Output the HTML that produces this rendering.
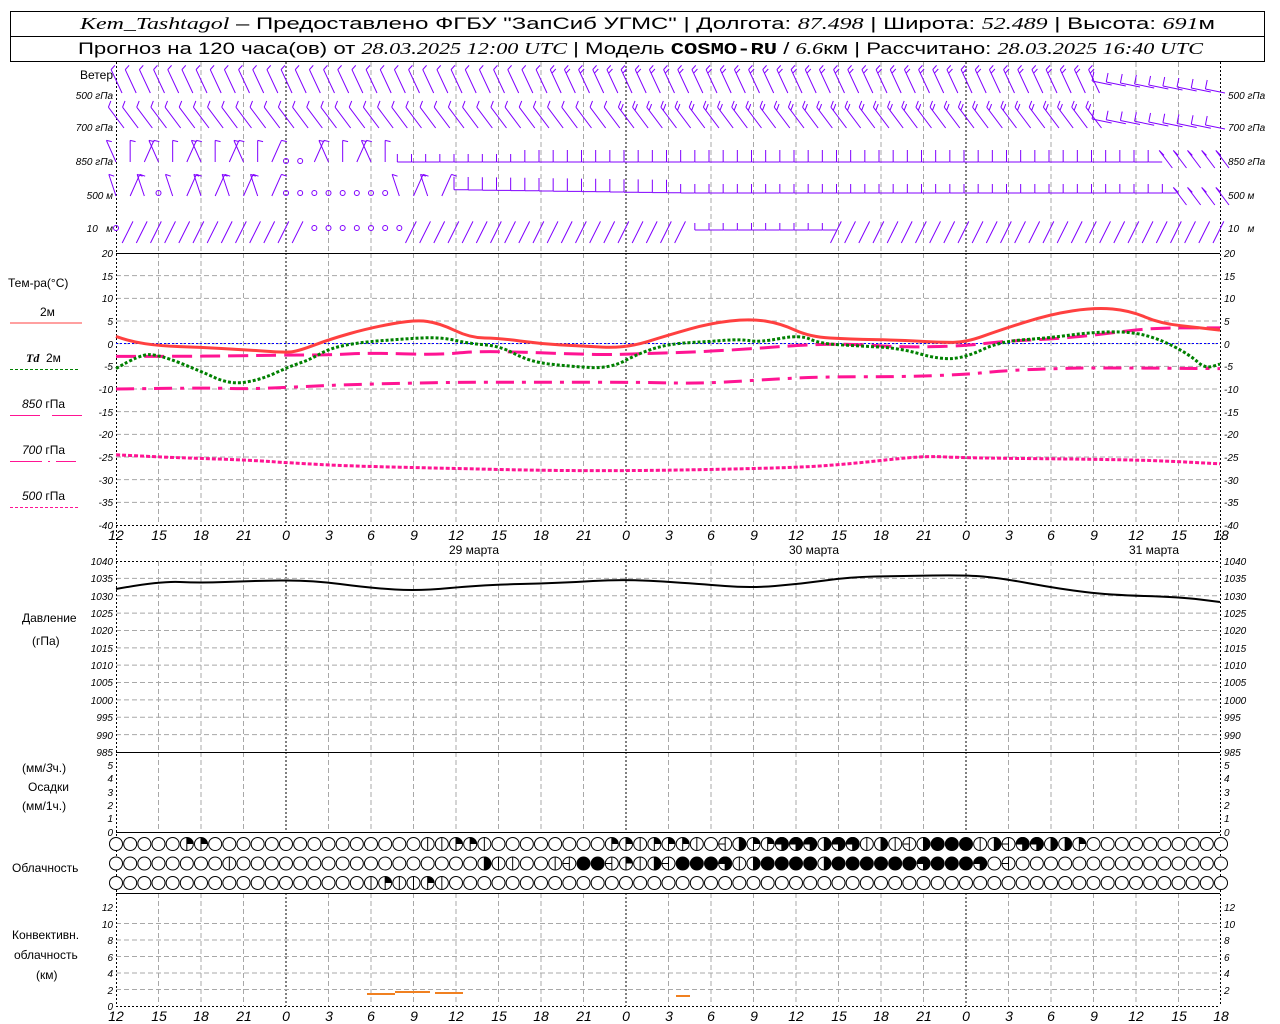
<!DOCTYPE html>
<html><head><meta charset="utf-8"><style>
html,body{margin:0;padding:0;background:#fff;width:1280px;height:1024px;overflow:hidden}
svg{display:block}
.t{font-family:"Liberation Sans",sans-serif;font-size:10px;font-style:italic;fill:#000}
.l{font-family:"Liberation Sans",sans-serif;font-size:12px;fill:#000}
.h{font-family:"Liberation Sans",sans-serif;font-size:17px;fill:#000}
.hi{font-family:"Liberation Serif",serif;font-style:italic}
.tm{font-family:"Liberation Sans",sans-serif;font-size:14px;font-style:italic;fill:#000}
</style></head><body>
<svg id="s" width="1280" height="1024" viewBox="0 0 1280 1024" xmlns="http://www.w3.org/2000/svg">
<rect x="0" y="0" width="1280" height="1024" fill="#fff"/>
<rect x="10.5" y="11.5" width="1254" height="50" fill="none" stroke="#000"/>
<line x1="10" y1="36.5" x2="1265" y2="36.5" stroke="#000"/>
<text class="h" x="80" y="29" textLength="1135" lengthAdjust="spacingAndGlyphs"><tspan class="hi">Kem_Tashtagol</tspan> – Предоставлено ФГБУ "ЗапСиб УГМС" | Долгота: <tspan class="hi">87.498</tspan> | Широта: <tspan class="hi">52.489</tspan> | Высота: <tspan class="hi">691</tspan>м</text>
<text class="h" x="78" y="54" textLength="1125" lengthAdjust="spacingAndGlyphs">Прогноз на 120 часа(ов) от <tspan class="hi">28.03.2025 12:00 UTC</tspan>  | Модель <tspan font-family="Liberation Mono" font-weight="bold">COSMO-RU</tspan> / <tspan class="hi">6.6</tspan>км | Рассчитано: <tspan class="hi">28.03.2025 16:40 UTC</tspan></text>
<g id="grid"></g>
<g id="data"></g>
<g class="t" text-anchor="end">
<text x="113" y="79" style="font-style:normal;font-size:12px">Ветер</text>
<text x="113" y="99">500 гПа</text>
<text x="113" y="131">700 гПа</text>
<text x="113" y="165">850 гПа</text>
<text x="113" y="199">500 м</text>
<text x="113" y="232">10&#160;&#160;&#160;м</text>
</g>
<g class="t">
<text x="1228" y="99">500 гПа</text>
<text x="1228" y="131">700 гПа</text>
<text x="1228" y="165">850 гПа</text>
<text x="1228" y="199">500 м</text>
<text x="1228" y="232">10&#160;&#160;&#160;м</text>
</g>
<text class="l" x="8" y="287" font-size="13">Тем-ра(°C)</text>
<text class="l" x="40" y="316" font-size="11">2м</text>
<line x1="10" y1="323" x2="82" y2="323" stroke="#ff4040" stroke-width="1"/>
<text class="l" x="26" y="362" font-size="11"><tspan class="hi" font-weight="bold">Td</tspan>&#160;&#160;2м</text>
<line x1="10" y1="369.5" x2="78" y2="369.5" stroke="#008000" stroke-dasharray="3,2"/>
<text class="l" x="22" y="408" font-size="11"><tspan font-style="italic">850</tspan> гПа</text>
<path d="M10 415.5H40M52 415.5H82" stroke="#ff1493"/>
<text class="l" x="22" y="454" font-size="11"><tspan font-style="italic">700</tspan> гПа</text>
<path d="M10 461.5H42M48 461.5H50M56 461.5H76" stroke="#ff1493"/>
<text class="l" x="22" y="500" font-size="11"><tspan font-style="italic">500</tspan> гПа</text>
<line x1="10" y1="507.5" x2="78" y2="507.5" stroke="#ff1493" stroke-dasharray="3,2"/>
<text class="l" x="22" y="622">Давление</text>
<text class="l" x="32" y="645">(гПа)</text>
<text class="l" x="22" y="772">(мм/<tspan font-style="italic">3</tspan>ч.)</text>
<text class="l" x="28" y="791">Осадки</text>
<text class="l" x="22" y="810">(мм/1ч.)</text>
<text class="l" x="12" y="872">Облачность</text>
<text class="l" x="12" y="939">Конвективн.</text>
<text class="l" x="14" y="959">облачность</text>
<text class="l" x="36" y="979">(км)</text>
<g class="t" text-anchor="end">
<text x="113" y="257">20</text><text x="113" y="280">15</text><text x="113" y="302">10</text><text x="113" y="325">5</text><text x="113" y="348">0</text><text x="113" y="370">-5</text><text x="113" y="393">-10</text><text x="113" y="416">-15</text><text x="113" y="438">-20</text><text x="113" y="461">-25</text><text x="113" y="484">-30</text><text x="113" y="506">-35</text><text x="113" y="529">-40</text>
<text x="113" y="565">1040</text><text x="113" y="582">1035</text><text x="113" y="600">1030</text><text x="113" y="617">1025</text><text x="113" y="634">1020</text><text x="113" y="652">1015</text><text x="113" y="669">1010</text><text x="113" y="686">1005</text><text x="113" y="704">1000</text><text x="113" y="721">995</text><text x="113" y="739">990</text><text x="113" y="756">985</text>
<text x="113" y="769">5</text><text x="113" y="782">4</text><text x="113" y="796">3</text><text x="113" y="809">2</text><text x="113" y="822">1</text><text x="113" y="836">0</text>
<text x="113" y="911">12</text><text x="113" y="928">10</text><text x="113" y="944">8</text><text x="113" y="961">6</text><text x="113" y="977">4</text><text x="113" y="994">2</text><text x="113" y="1010">0</text>
</g>
<g class="t">
<text x="1224" y="257">20</text><text x="1224" y="280">15</text><text x="1224" y="302">10</text><text x="1224" y="325">5</text><text x="1224" y="348">0</text><text x="1224" y="370">-5</text><text x="1224" y="393">-10</text><text x="1224" y="416">-15</text><text x="1224" y="438">-20</text><text x="1224" y="461">-25</text><text x="1224" y="484">-30</text><text x="1224" y="506">-35</text><text x="1224" y="529">-40</text>
<text x="1224" y="565">1040</text><text x="1224" y="582">1035</text><text x="1224" y="600">1030</text><text x="1224" y="617">1025</text><text x="1224" y="634">1020</text><text x="1224" y="652">1015</text><text x="1224" y="669">1010</text><text x="1224" y="686">1005</text><text x="1224" y="704">1000</text><text x="1224" y="721">995</text><text x="1224" y="739">990</text><text x="1224" y="756">985</text>
<text x="1224" y="769">5</text><text x="1224" y="782">4</text><text x="1224" y="796">3</text><text x="1224" y="809">2</text><text x="1224" y="822">1</text><text x="1224" y="836">0</text>
<text x="1224" y="911">12</text><text x="1224" y="928">10</text><text x="1224" y="944">8</text><text x="1224" y="961">6</text><text x="1224" y="977">4</text><text x="1224" y="994">2</text>
</g>
<g class="tm" text-anchor="middle">
<text x="116" y="540">12</text><text x="159" y="540">15</text><text x="201" y="540">18</text><text x="244" y="540">21</text><text x="286" y="540">0</text><text x="329" y="540">3</text><text x="371" y="540">6</text><text x="414" y="540">9</text><text x="456" y="540">12</text><text x="499" y="540">15</text><text x="541" y="540">18</text><text x="584" y="540">21</text><text x="626" y="540">0</text><text x="669" y="540">3</text><text x="711" y="540">6</text><text x="754" y="540">9</text><text x="796" y="540">12</text><text x="839" y="540">15</text><text x="881" y="540">18</text><text x="924" y="540">21</text><text x="966" y="540">0</text><text x="1009" y="540">3</text><text x="1051" y="540">6</text><text x="1094" y="540">9</text><text x="1136" y="540">12</text><text x="1179" y="540">15</text><text x="1221" y="540">18</text>
</g>
<g class="l" text-anchor="middle" font-size="13">
<text x="474" y="554">29 марта</text><text x="814" y="554">30 марта</text><text x="1154" y="554">31 марта</text>
</g>
<g class="tm" text-anchor="middle">
<text x="116" y="1021">12</text><text x="159" y="1021">15</text><text x="201" y="1021">18</text><text x="244" y="1021">21</text><text x="286" y="1021">0</text><text x="329" y="1021">3</text><text x="371" y="1021">6</text><text x="414" y="1021">9</text><text x="456" y="1021">12</text><text x="499" y="1021">15</text><text x="541" y="1021">18</text><text x="584" y="1021">21</text><text x="626" y="1021">0</text><text x="669" y="1021">3</text><text x="711" y="1021">6</text><text x="754" y="1021">9</text><text x="796" y="1021">12</text><text x="839" y="1021">15</text><text x="881" y="1021">18</text><text x="924" y="1021">21</text><text x="966" y="1021">0</text><text x="1009" y="1021">3</text><text x="1051" y="1021">6</text><text x="1094" y="1021">9</text><text x="1136" y="1021">12</text><text x="1179" y="1021">15</text><text x="1221" y="1021">18</text>
</g>
</svg>
<script>
(function(){
var NS="http://www.w3.org/2000/svg";
var G=document.getElementById('grid'),D=document.getElementById('data');
function el(p,n,a){var e=document.createElementNS(NS,n);for(var k in a)e.setAttribute(k,a[k]);p.appendChild(e);return e;}
var X0=116,X1=1220,DX=42.5/3;
function X(t){return X0+t*DX;}
var spans=[[62,253],[253,525],[561,752],[752,832],[893,1006]];
for(var k=1;k<26;k++){var x=X0+k*42.5;var day=(k%8==4);
 spans.forEach(function(s){el(G,'line',{x1:x,y1:s[0],x2:x,y2:s[1],stroke:day?'#000':'#a8a8a8','stroke-dasharray':day?'2,2':'5,3','stroke-width':1});});}
for(var i=1;i<12;i++){var y=253+i*272/12;el(G,'line',{x1:X0,y1:y,x2:X1,y2:y,stroke:'#a8a8a8','stroke-dasharray':'5,3'});}
for(var i=1;i<11;i++){var y=561+i*191/11;el(G,'line',{x1:X0,y1:y,x2:X1,y2:y,stroke:'#a8a8a8','stroke-dasharray':'5,3'});}
for(var i=1;i<6;i++){var y=1006-i*16.5;el(G,'line',{x1:X0,y1:y,x2:X1,y2:y,stroke:'#a8a8a8','stroke-dasharray':'5,3'});}
[X0,X1].forEach(function(x){el(G,'line',{x1:x+.5,y1:62,x2:x+.5,y2:1006,stroke:'#000','stroke-dasharray':'2,2'});});
el(G,'line',{x1:X0,y1:253.5,x2:X1,y2:253.5,stroke:'#000'});
el(G,'line',{x1:X0,y1:525.5,x2:X1,y2:525.5,stroke:'#000','stroke-dasharray':'2,2'});
el(G,'line',{x1:X0,y1:561.5,x2:X1,y2:561.5,stroke:'#000','stroke-dasharray':'2,2'});
el(G,'line',{x1:X0,y1:752.5,x2:X1,y2:752.5,stroke:'#000'});
el(G,'line',{x1:X0,y1:832.5,x2:X1,y2:832.5,stroke:'#000'});
el(G,'line',{x1:X0,y1:893.5,x2:X1,y2:893.5,stroke:'#000'});
el(G,'line',{x1:X0,y1:1006.5,x2:X1,y2:1006.5,stroke:'#000','stroke-dasharray':'2,2'});
el(G,'line',{x1:X0,y1:343.5,x2:X1,y2:343.5,stroke:'#0000ff','stroke-dasharray':'2,2'});
function ty(T){return 343.7-T*4.533;}
function pl(pts,f,attrs){var P=[];for(var i=0;i<pts.length;i+=2)P.push([pts[i],f(pts[i+1])]);
 var s='M'+P[0][0]+' '+P[0][1];
 for(var i=1;i<P.length-1;i++){var mx=(P[i][0]+P[i+1][0])/2,my=(P[i][1]+P[i+1][1])/2;s+='Q'+P[i][0]+' '+P[i][1]+' '+mx+' '+my;}
 s+='L'+P[P.length-1][0]+' '+P[P.length-1][1];
 attrs.d=s;attrs.fill='none';el(D,'path',attrs);}
pl([116,-24.5,160,-25,200,-25.3,250,-25.7,290,-26.3,350,-27,450,-27.5,550,-28,640,-28,700,-27.8,800,-27.3,850,-26.5,900,-25.3,930,-24.8,966,-25.2,1100,-25.5,1160,-25.8,1220,-26.5],ty,{stroke:'#ff1493','stroke-width':3,'stroke-dasharray':'4,2'});
pl([116,-10,200,-9.7,250,-10,300,-9.5,350,-9,450,-8.5,550,-8.5,640,-8.5,700,-8.8,760,-8,820,-7.3,900,-7.3,966,-6.8,1000,-6,1050,-5.5,1100,-5.3,1220,-5.5],ty,{stroke:'#ff1493','stroke-width':3,'stroke-dasharray':'18,8,4,8'});
pl([116,-2.8,200,-2.8,280,-2.5,330,-2.5,370,-2,440,-2.5,480,-1.5,600,-2.5,640,-2.2,700,-1.8,760,-1,800,-0.3,850,0,900,-0.8,966,-0.5,1000,0.5,1050,1,1100,2,1150,3.5,1220,3.5],ty,{stroke:'#ff1493','stroke-width':3,'stroke-dasharray':'20,8'});
pl([116,-5.5,140,-2.3,160,-2.5,200,-6,230,-9,260,-8,290,-5,310,-3.5,330,-1,360,0.3,400,1,440,1.5,470,0,500,-0.5,530,-4,570,-5,610,-5.5,640,-2,670,0,710,0.5,740,1,760,0.3,800,2,820,0,860,-0.5,900,-1,940,-3.5,966,-3,1000,0.5,1050,1.3,1090,2.5,1130,2.7,1160,1,1190,-2.5,1205,-5.5,1220,-4.5],ty,{stroke:'#008000','stroke-width':3,'stroke-dasharray':'3,2'});
pl([116,1.6,130,0.5,160,-0.5,200,-0.8,243,-1.3,286,-2,300,-1.5,330,1,370,3.5,415,5.3,440,4.5,470,1.3,500,1.2,540,0,580,-0.5,626,-1,670,2,710,4.5,750,5.5,780,4.5,810,1.5,850,1,900,0.8,940,0.3,966,0.3,1000,3,1050,6.5,1095,8,1130,7.3,1160,4.5,1200,3.5,1220,3],ty,{stroke:'#ff4040','stroke-width':3});
pl([116,589,160,581,200,583,250,581,310,580,370,588,420,591,480,585,560,583,626,579,700,584,750,588,800,584,850,577,900,576,966,575,1000,578,1060,589,1110,595,1180,597,1220,602],function(v){return v;},{stroke:'#000','stroke-width':2});
el(D,'path',{d:'M367 994H395M395 992H430M435 993H463M676 996H690',stroke:'#f08020','stroke-width':2,fill:'none'});
var PC='#8000ff';
function barb(x,y,dx,dy,L,n,fdx,fdy,fl){fl=fl||8;var tx=x+dx*L,ty2=y+dy*L;var d='M'+x+' '+y+'L'+tx+' '+ty2;
 for(var i=0;i<n;i++){var sx=tx-dx*i*4,sy=ty2-dy*i*4;d+='M'+sx+' '+sy+'l'+fdx*fl+' '+fdy*fl;}
 el(D,'path',{d:d,stroke:PC,'stroke-width':1,fill:'none'});}
function calm(x,y){el(D,'circle',{cx:x,cy:y,r:2.5,stroke:PC,fill:'none'});}
for(var t=0;t<=78;t++){var x=X(t);
 if(t<70){barb(x+6,93,-0.42,-0.9,26,t>30?2:1,0.55,-0.6,7);}else{var f=(t-70)/8;barb(x+4,91-(1-f)*6+f*2,-0.98,-0.2,20,1,0.2,-1,9);}
 if(t<70){barb(x+8,128,-0.6,-0.8,26,t>35?2:1,0.35,-0.9,7);}else{barb(x+4,126-((78-t)/8)*6+3,-0.98,-0.2,20,1,0.2,-1,9);}
 if(t==12||t==13){calm(x,161);}
 else if(t<20){barb(x,162,(t%3-1)*0.4,-0.9,24,1,0.9,0.2,6);}
 else if(t<74){if(t%1==0)barb(x+12,162,-1,0,14,1,0,-1,t>28?12:8);}
 else{barb(x+8,168,-0.6,-0.8,22,1,0.7,0.7,7);}
 if(t==3||(t>=12&&t<=19)){calm(x,193);}
 else if(t<24){barb(x,196,(t%2?0.4:-0.3),-0.9,24,1,0.9,0.3,6);}
 else if(t<75){barb(x+12,193-(t<40?(40-t)*0.2:0),-1,0,14,1,0,-1,t<40?13:9);}
 else{barb(x+8,205,-0.6,-0.8,22,1,0.7,0.7,7);}
 if(t==0){calm(x,228);}
 else if(t>=14&&t<=20){calm(x,228);}
 else if(t>=41&&t<=50){barb(x+12,230,-1,0,14,1,0,-1,7);}
 else{barb(x-8,243,0.45,-0.9,24,0,0,0);}
}
function mk(sets){var a=[];for(var i=0;i<79;i++)a.push('o');for(var k in sets)a[k]=sets[k];return a;}
var r1=mk({5:'q',6:'q',22:'|',23:'|',24:'q',25:'q',26:'|',35:'q',36:'q',37:'|',38:'q',39:'q',40:'q',41:'|',43:'-',44:'h',45:'q',46:'q',47:'t',48:'t',49:'t',50:'h',51:'t',52:'t',53:'|',54:'h',55:'|',56:'-',57:'h',58:'f',59:'f',60:'f',61:'|',62:'h',63:'-',64:'t',65:'t',66:'h',67:'h',68:'q'});
var s2={8:'|',26:'h',27:'|',28:'|',31:'|',32:'-',33:'f',34:'f',35:'-',36:'q',37:'|',38:'h',39:'-',40:'f',41:'f',42:'f',43:'t',44:'|',45:'h',46:'f',47:'f',48:'f',49:'f',50:'h',61:'t',63:'-'};
for(var i=51;i<=60;i++)s2[i]='f';s2[57]='t';
var r2=mk(s2);
var r3=mk({18:'|',19:'q',20:'|',21:'|',22:'q',23:'|'});
var R=6.5;
function cloud(cx,cy,s){
 if(s=='f'){el(D,'circle',{cx:cx,cy:cy,r:R,fill:'#000',stroke:'#000'});return;}
 el(D,'circle',{cx:cx,cy:cy,r:R,fill:'#fff',stroke:'#000'});
 if(s=='|'||s=='-'||s=='q')el(D,'line',{x1:cx,y1:cy-R,x2:cx,y2:cy+R,stroke:'#000'});
 if(s=='-')el(D,'line',{x1:cx-R,y1:cy,x2:cx,y2:cy,stroke:'#000'});
 if(s=='q')el(D,'path',{d:'M'+cx+' '+cy+'V'+(cy-R)+'A'+R+' '+R+' 0 0 1 '+(cx+R)+' '+cy+'Z',fill:'#000'});
 if(s=='h')el(D,'path',{d:'M'+cx+' '+(cy-R)+'A'+R+' '+R+' 0 0 1 '+cx+' '+(cy+R)+'Z',fill:'#000',stroke:'#000'});
 if(s=='t')el(D,'path',{d:'M'+cx+' '+cy+'H'+(cx-R)+'A'+R+' '+R+' 0 1 1 '+cx+' '+(cy+R)+'Z',fill:'#000',stroke:'#000'});
}
for(var i=0;i<79;i++){var cx=X(i);cloud(cx,844,r1[i]);cloud(cx,863.5,r2[i]);cloud(cx,883,r3[i]);}
})();
</script>
</body></html>
